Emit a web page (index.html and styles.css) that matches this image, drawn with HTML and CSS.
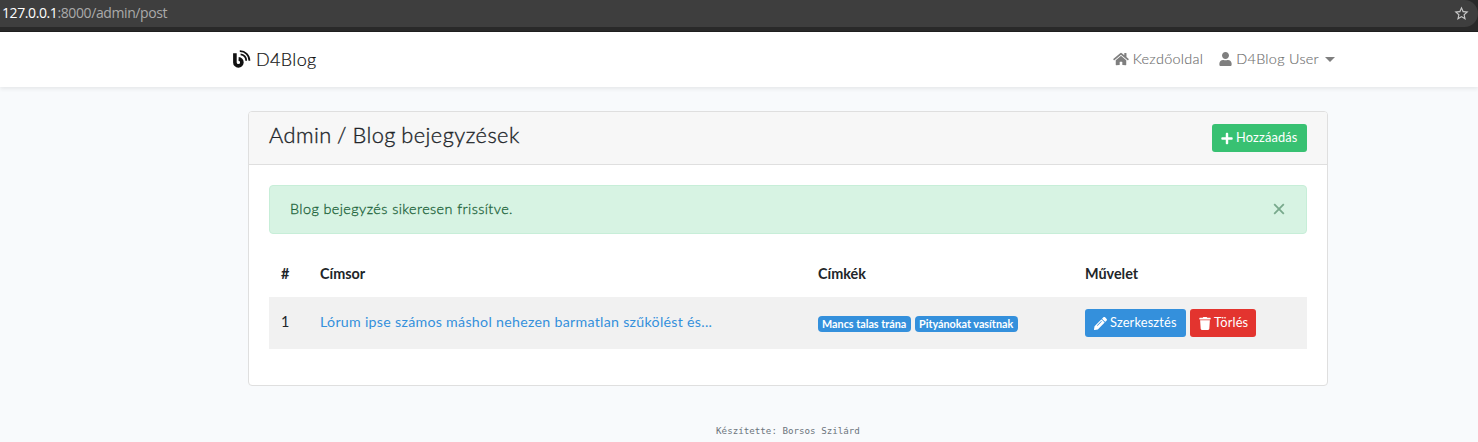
FILE: index.html
```html
<!DOCTYPE html>
<html lang="hu">
<head>
<meta charset="utf-8">
<title>D4Blog</title>
<link rel="stylesheet" href="styles.css">
</head>
<body>
<div class="browser">
  <div class="address">
    <span class="url"><span class="host">127.0.0.1</span>:8000/admin/post</span>
    <svg class="star" viewBox="0 0 24 24"><path d="M22 9.24l-7.19-.62L12 2 9.19 8.63 2 9.24l5.46 4.73L5.82 21 12 17.27 18.18 21l-1.63-7.03L22 9.24zM12 15.4l-3.76 2.27 1-4.28-3.32-2.88 4.38-.38L12 6.1l1.71 4.04 4.38.38-3.32 2.88 1 4.28L12 15.4z"/></svg>
  </div>
</div>
<nav class="navbar">
  <a class="brand"><svg class="blog-icon" viewBox="0 0 19 19"><path d="M2.9 3.2v9.2a3.5 3.5 0 1 0 3.7-3.5" stroke-width="3.6"/><path d="M8.6 4.4a6 6 0 0 1 5.6 6.4M7.8 1.2a9.4 9.4 0 0 1 9.6 9.6" stroke-width="1.8"/></svg><span class="brand-name">D4Blog</span></a>
  <div class="links">
    <a class="link"><svg class="home" viewBox="0 0 576 512"><path d="M280.37 148.26L96 300.11V464a16 16 0 0 0 16 16l112.06-.29a16 16 0 0 0 15.92-16V368a16 16 0 0 1 16-16h64a16 16 0 0 1 16 16v95.64a16 16 0 0 0 16 16.05L464 480a16 16 0 0 0 16-16V300L295.67 148.26a12.19 12.19 0 0 0-15.3 0zM571.6 251.47L488 182.56V44.05a12 12 0 0 0-12-12h-56a12 12 0 0 0-12 12v72.61L318.47 43a48 48 0 0 0-61 0L4.34 251.47a12 12 0 0 0-1.6 16.9l25.5 31A12 12 0 0 0 45.15 301l235.22-193.74a12.19 12.19 0 0 1 15.3 0L530.9 301a12 12 0 0 0 16.9-1.6l25.5-31a12 12 0 0 0-1.7-16.93z"/></svg><span class="home-text">Kezdőoldal</span></a>
    <a class="link"><svg class="user" viewBox="0 0 448 512"><path d="M224 256c70.7 0 128-57.3 128-128S294.7 0 224 0 96 57.3 96 128s57.3 128 128 128zm89.6 32h-16.7c-22.2 10.2-46.9 16-72.9 16s-50.6-5.8-72.9-16h-16.7C60.2 288 0 348.2 0 422.4V464c0 26.5 21.5 48 48 48h352c26.5 0 48-21.5 48-48v-41.6c0-74.2-60.2-134.4-134.4-134.4z"/></svg><span class="user-text">D4Blog User</span><i class="caret"></i></a>
  </div>
</nav>
<main class="card">
  <header class="card-header">
    <h1 class="title">Admin / Blog bejegyzések</h1>
    <a class="btn add"><svg class="icon-plus" viewBox="0 0 448 512"><path d="M416 208H272V64c0-17.67-14.33-32-32-32h-32c-17.67 0-32 14.33-32 32v144H32c-17.67 0-32 14.33-32 32v32c0 17.67 14.33 32 32 32h144v144c0 17.67 14.33 32 32 32h32c17.67 0 32-14.33 32-32V304h144c17.67 0 32-14.33 32-32v-32c0-17.67-14.33-32-32-32z"/></svg><span>Hozzáadás</span></a>
  </header>
  <div class="card-body">
    <div class="alert"><span class="alert-text">Blog bejegyzés sikeresen frissítve.</span><svg class="close" viewBox="0 0 12 12"><path d="M1.2 1.2l9.6 9.6M10.8 1.2l-9.6 9.6"/></svg></div>
    <div class="row head"><span>#</span><span>Címsor</span><span>Címkék</span><span>Művelet</span></div>
    <div class="row item">
      <span class="number">1</span>
      <span class="heading"><a class="post">Lórum ipse számos máshol nehezen barmatlan szűkölést és...</a></span>
      <span class="tags"><b class="tag tag-a">Mancs talas trána</b><b class="tag tag-b">Pityánokat vasítnak</b></span>
      <span class="actions">
        <a class="btn edit"><svg class="icon-pencil" viewBox="0 0 512 512"><path d="M497.9 142.1l-46.1 46.1c-4.7 4.7-12.3 4.7-17 0l-111-111c-4.7-4.7-4.7-12.3 0-17l46.1-46.1c18.7-18.7 49.1-18.7 67.9 0l60.1 60.1c18.8 18.7 18.8 49.1 0 67.9zM284.2 99.8L21.6 362.4.4 483.9c-2.9 16.4 11.4 30.6 27.8 27.8l121.5-21.3 262.6-262.6c4.7-4.7 4.7-12.3 0-17l-111-111c-4.8-4.7-12.4-4.7-17.1 0zM124.1 339.9c-5.5-5.5-5.5-14.3 0-19.8l154-154c5.5-5.5 14.3-5.5 19.8 0s5.5 14.3 0 19.8l-154 154c-5.5 5.5-14.3 5.5-19.8 0z"/></svg><span>Szerkesztés</span></a>
        <a class="btn delete"><svg class="icon-trash" viewBox="0 0 448 512"><path d="M432 32H312l-9.4-18.7A24 24 0 0 0 281.1 0H166.8a23.72 23.72 0 0 0-21.4 13.3L136 32H16A16 16 0 0 0 0 48v32a16 16 0 0 0 16 16h416a16 16 0 0 0 16-16V48a16 16 0 0 0-16-16zM53.2 467a48 48 0 0 0 47.9 45h245.8a48 48 0 0 0 47.9-45L416 128H32z"/></svg><span>Törlés</span></a>
      </span>
    </div>
  </div>
</main>
<footer class="footer">Készítette: Borsos Szilárd</footer>
</body>
</html>
```
FILE: styles.css
```css
* { box-sizing: border-box; }
body { margin: 0; height: 442px; overflow: hidden; background: #f8fafc; color: #212529; font: 14.4px/23px Lato, "Open Sans", sans-serif; white-space: nowrap; }
svg { display: block; flex: none; fill: currentColor; }
.browser { height: 32px; background: #292929; border-bottom: 1px solid #202020; }
.address { height: 27px; padding: 0 8px 0 2px; display: flex; align-items: center; justify-content: space-between; background: #3e3e3e; border-radius: 0 14px 14px 0; color: #aaa; font: 14px/26px "Open Sans", sans-serif; }
.url { padding-bottom: 1px; letter-spacing: -.4px; }
.host { color: #fff; }
.star { width: 17px; height: 17px; color: #c8c8c8; }
.navbar { height: 55px; padding: 0 143px 0 232px; display: flex; align-items: center; justify-content: space-between; background: #fff; box-shadow: 0 2px 4px rgba(0,0,0,.075); }
.brand { display: flex; align-items: center; gap: 5px; color: #111; }
.blog-icon { width: 19px; height: 19px; fill: none; stroke: currentColor; }
.brand-name { font-size: 18px; font-weight: 300; letter-spacing: .35px; -webkit-text-stroke: .2px; }
.links { display: flex; gap: 16px; padding-bottom: 1px; color: #7f7f7f; }
.link { display: flex; align-items: center; gap: 4px; }
.home { width: 16px; height: 14px; }
.user { width: 13px; height: 14px; }
.home-text, .user-text { padding-bottom: 1px; font-weight: 300; color: #707070; letter-spacing: .3px; -webkit-text-stroke: .15px; }
.caret { margin-left: 2px; border: 5px solid transparent; border-top-color: currentColor; border-bottom: 0; }
.card { width: 1080px; height: 275px; margin: 24px 0 0 248px; background: #fff; border: 1px solid #dfdfdf; border-radius: 4px; }
.card-header { height: 53px; padding: 0 20px; display: flex; justify-content: space-between; align-items: center; background: #f7f7f7; border-bottom: 1px solid #dfdfdf; border-radius: 3px 3px 0 0; }
.title { margin: 0 0 6px; font-size: 21.8px; font-weight: 300; line-height: 26px; letter-spacing: .46px; word-spacing: -1px; color: #212529; -webkit-text-stroke: .35px; }
.btn { height: 28px; padding: 0 9px; display: flex; align-items: center; gap: 3px; border-radius: 3px; color: #fff; font-size: 12.8px; line-height: 27px; letter-spacing: .16px; }
.btn span { padding-bottom: 1px; }
.add { width: 95px; background: #38c172; }
.icon-plus, .icon-trash { width: 12px; height: 13px; }
.icon-pencil { width: 13px; height: 13px; }
.card-body { padding: 20px; }
.alert { height: 49px; padding: 0 21px 1px 20px; display: flex; align-items: center; justify-content: space-between; background: #d7f3e3; border: 1px solid #c7eed8; border-radius: 4px; color: #1d643b; }
.alert-text { padding-bottom: 2px; font-size: 14.4px; font-weight: 300; letter-spacing: .42px; -webkit-text-stroke: .3px; }
.close { width: 12px; height: 12px; fill: none; stroke: #78a98c; stroke-width: 1.8; }
.row { display: grid; grid-template-columns: 39px 498px 267px 1fr; align-items: center; padding-left: 12px; }
.head { height: 47px; margin-top: 16px; font-weight: 700; }
.item { height: 52px; background: #f1f1f1; }
.number, .heading { padding-bottom: 3px; }
.post { color: #3490dc; font-size: 14.2px; letter-spacing: .29px; }
.tags, .actions { display: flex; gap: 4px; }
.tags { padding-top: 2px; }
.tag { height: 16px; padding: 0 4px; border-radius: 4px; background: #3490dc; color: #fff; font-size: 10.8px; line-height: 16px; }
.tag-a { width: 93px; }
.tag-b { width: 103px; }
.edit { width: 101px; background: #3490dc; }
.delete { width: 66px; background: #e3342f; }
.footer { margin-top: 38px; padding-left: 98px; text-align: center; color: #6c757d; font: 9.2px/14px "DejaVu Sans Mono", monospace; }
```
